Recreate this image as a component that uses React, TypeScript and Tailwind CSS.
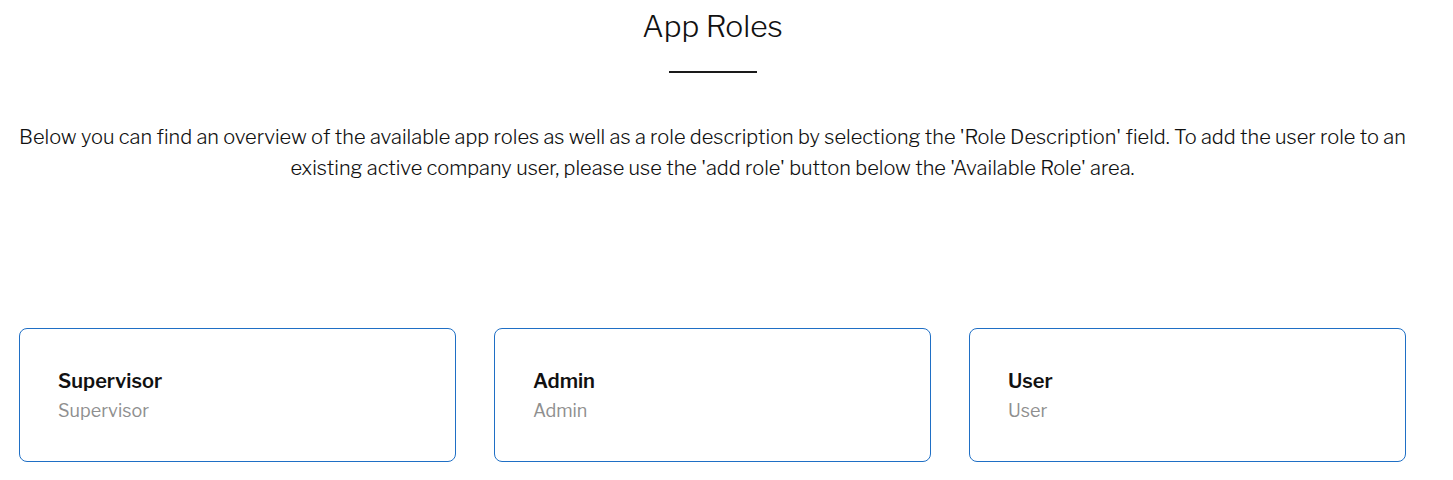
const ROLES = [
  { title: "Supervisor", description: "Supervisor" },
  { title: "Admin", description: "Admin" },
  { title: "User", description: "User" },
];

export default function App() {
  return (
    <div className="min-h-screen bg-white font-['Libre_Franklin','Inter','Liberation_Sans',sans-serif] text-[#111]">
      <div className="ml-[19px] mr-[47px]">
        {/* header */}
        <div className="flex flex-col items-center pt-[6px]">
          <h1 className="text-[30px] font-light leading-[40px] text-[#111]">App Roles</h1>
          <div className="mt-[25px] h-[2px] w-[88px] bg-[#1a1a1a]" />
        </div>

        <p className="mt-[49px] text-center text-[20px] font-light leading-[31px] text-[#111]">
          Below you can find an overview of the available app roles as well as a role description by selectiong the 'Role Description' field. To add the user role to an existing active company user, please use the 'add role' button below the 'Available Role' area.
        </p>

        {/* role cards */}
        <div className="mt-[144px] grid grid-cols-3 gap-[38px]">
          {ROLES.map((role) => (
            <div
              key={role.title}
              className="flex h-[134px] flex-col justify-center rounded-[8px] border border-[#1f6fc5] px-[38px]"
            >
              <div className="text-[20px] font-semibold leading-[26px] text-[#111]">{role.title}</div>
              <div className="mt-[5px] text-[18px] leading-[24px] text-[#8f8f8f]">{role.description}</div>
            </div>
          ))}
        </div>
      </div>
    </div>
  );
}
